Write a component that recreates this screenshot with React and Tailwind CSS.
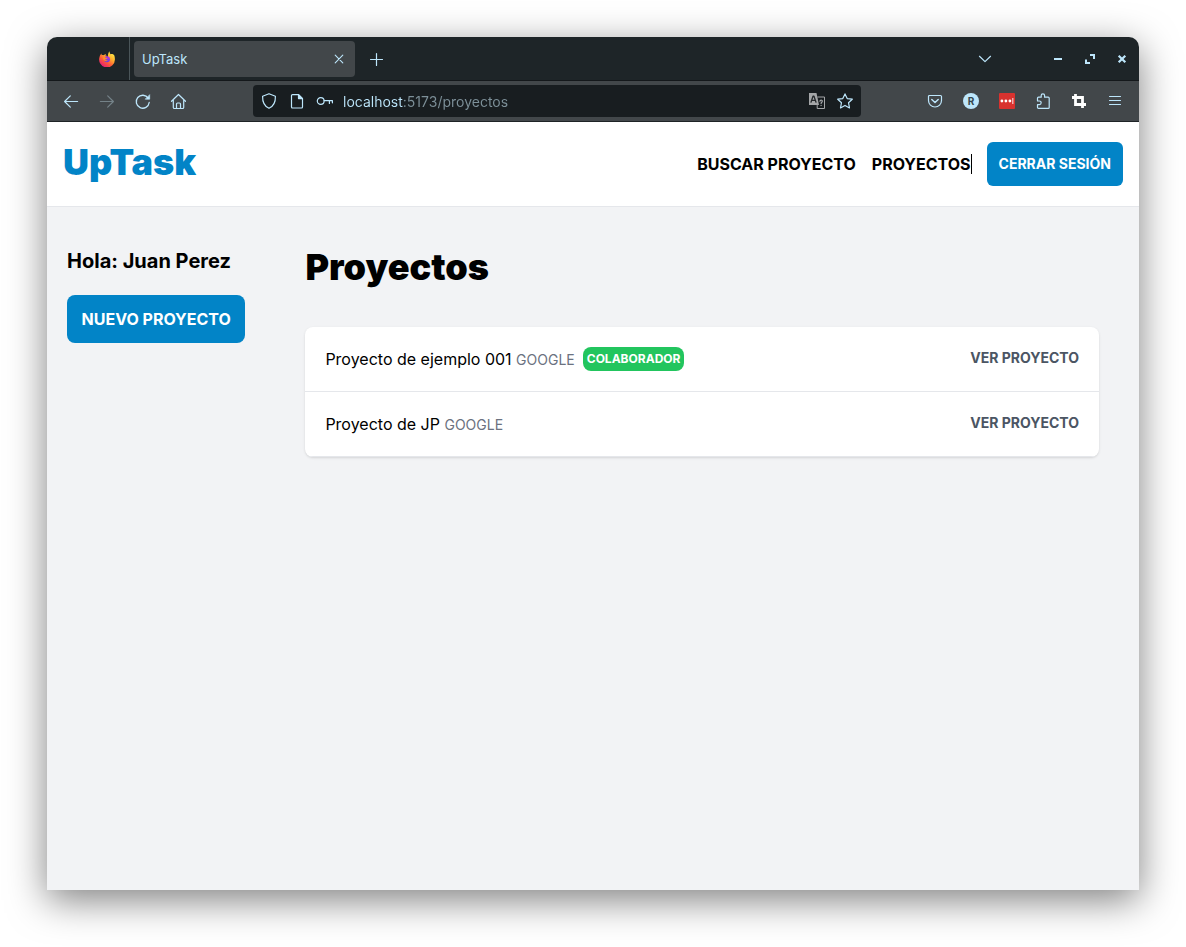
import React from "react";

const projects = [
  { name: "Proyecto de ejemplo 001", client: "Google", collaborator: true },
  { name: "Proyecto de JP", client: "Google", collaborator: false },
];

function Icon({ children }) {
  return (
    <svg
      viewBox="0 0 16 16"
      className="size-4 shrink-0 overflow-visible"
      fill="none"
      stroke="currentColor"
      strokeWidth="1.2"
      strokeLinecap="round"
      strokeLinejoin="round"
      aria-hidden="true"
    >
      {children}
    </svg>
  );
}

function ToolButton({ label, className = "w-9", children }) {
  return (
    <button type="button" aria-label={label} className={`flex h-8 shrink-0 items-center justify-center ${className}`}>
      <Icon>{children}</Icon>
    </button>
  );
}

function FirefoxLogo() {
  return (
    <svg viewBox="0 0 16 16" className="size-4" aria-hidden="true">
      <defs>
        <linearGradient id="fx-body" x1="0.85" y1="0.05" x2="0.2" y2="0.95">
          <stop offset="0" stopColor="#fff14a" />
          <stop offset="0.35" stopColor="#ffb02e" />
          <stop offset="0.65" stopColor="#ff5a36" />
          <stop offset="1" stopColor="#e5187a" />
        </linearGradient>
        <linearGradient id="fx-globe" x1="0.7" y1="0" x2="0.3" y2="1">
          <stop offset="0" stopColor="#b833e1" />
          <stop offset="1" stopColor="#5b3fe0" />
        </linearGradient>
      </defs>
      <path
        d="M10.7.3c-.3 1.300.1 2.200.9 2.900C13.800 2.900 14 3.500 14.700 4.200c-.2-.8-.1-1.200-.3-1.500C15.500 4.500 15.900 6 15.900 8A7.900 7.900 0 1 1 .6 5.800C1 4.500 1.500 3.400 2.500 2.600l.2 1.700c.7-.4 1.500-.4 2.200-.1.600-.8 1.400-1.300 2.300-1.400-.5.5-.8 1-.8 1.600 1 .2 1.700.2 1.700.7-.3.700-1.600.9-1.700 1.600h2C9.300 5 8.500 2.200 10.700.3z"
        fill="url(#fx-body)"
      />
      <circle cx="8" cy="8.300" r="3" fill="url(#fx-globe)" />
      <path d="M3.600 6.400c1-.5 2-.4 2.800.1.800.4 1.600.4 2.200.7-.6.9-1.500 1.200-2.500 1.100.5.900 1.700 1.500 3 .9-1.300 1.900-4.600 1.200-5.500-2.800z" fill="#ff8a2a" />
    </svg>
  );
}

function TitleBar() {
  return (
    <div className="flex h-11 items-stretch border-b border-[#14181b] bg-[#1e2528]">
      <div className="flex w-[83px] shrink-0 items-center justify-end border-r border-[#4a5559] pr-3.5">
        <FirefoxLogo />
      </div>
      <div className="mx-1 mt-1 mb-[3px] flex w-[221px] items-center justify-between rounded bg-[#42474a] pl-2">
        <span className="text-[13px] leading-5">UpTask</span>
        <ToolButton label="Cerrar pestaña" className="w-8">
          <path d="M4.200 4.200l7.600 7.600M11.800 4.200l-7.600 7.600" strokeWidth="1.100" />
        </ToolButton>
      </div>
      <div className="flex flex-1 items-center justify-between pr-px">
        <ToolButton label="Nueva pestaña">
          <path d="M7.500 2.500v12M1.500 8.500h12" strokeWidth="1.200" />
        </ToolButton>
        <div className="flex items-center">
          <ToolButton label="Listar pestañas" className="mr-10 w-8">
            <path d="M1.200 5l5.800 5.600L12.800 5" strokeLinecap="butt" />
          </ToolButton>
          <ToolButton label="Minimizar" className="w-8">
            <path d="M4 8h8" strokeWidth="2" strokeLinecap="butt" />
          </ToolButton>
          <ToolButton label="Maximizar" className="w-8">
            <path d="M8 4h4v4M4 8.500V12h4" strokeWidth="2" strokeLinecap="butt" strokeLinejoin="miter" />
          </ToolButton>
          <ToolButton label="Cerrar ventana" className="w-8">
            <path d="M4.700 4.700l6.600 6.600M11.300 4.700l-6.600 6.600" strokeWidth="2.200" strokeLinecap="butt" />
          </ToolButton>
        </div>
      </div>
    </div>
  );
}

function AddressBar() {
  return (
    <div className="mx-14 flex h-8 flex-1 items-center rounded bg-[#181d20] px-0.5">
      <ToolButton label="Protección antirrastreo" className="w-7">
        <path d="M8 .7l6.400 2.500c.2 5.600-1.400 9.800-6.400 12.100-5-2.300-6.600-6.500-6.400-12.100z" />
      </ToolButton>
      <ToolButton label="Información del sitio" className="w-7">
        <path d="M3.500 1.600h6l4 4v8.400a1 1 0 0 1-1 1h-9a1 1 0 0 1-1-1V2.600a1 1 0 0 1 1-1z" />
        <path d="M9.500 1.600v4h4z" fill="currentColor" />
      </ToolButton>
      <ToolButton label="Contraseñas guardadas" className="w-7">
        <circle cx="3.700" cy="8" r="3.400" />
        <path d="M7.100 7.600h8.300v2.200M12.400 7.600v2.800" />
      </ToolButton>
      <input
        aria-label="Dirección"
        defaultValue="localhost:5173/proyectos"
        className="mx-1 h-6 min-w-0 flex-1 bg-[linear-gradient(90deg,#bde6fb_60px,#7d9099_60px)] bg-clip-text text-sm text-transparent caret-white outline-none"
      />
      <ToolButton label="Traducir página" className="w-7">
        <path d="M0 0h7.500l2.500 12H0z" fill="#a4a6a8" stroke="none" />
        <path d="M2 9.200l2-6h1l2 6M2.800 7.400h3.400" stroke="#25292c" strokeWidth="1.300" />
        <path d="M8.800 4h6.700v11.500H8.200v-3" stroke="#a4a6a8" strokeWidth="1" />
        <path d="M10.900 8.200c.1-1.600 2.500-1.500 2.400 0 0 1-1.200 1-1.200 2.200M12.100 12.300v.1" stroke="#a4a6a8" strokeWidth="1.200" />
      </ToolButton>
      <ToolButton label="Añadir a marcadores" className="w-7">
        <path d="M8 .9l2.200 4.700 5.100.6-3.800 3.500 1 5.200L8 12.400l-4.500 2.500 1-5.200L.7 6.200l5.100-.6z" />
      </ToolButton>
    </div>
  );
}

function Toolbar() {
  return (
    <div className="flex h-[41px] items-center border-b border-[#1e2326] bg-[#42474a] px-1.5">
      <ToolButton label="Atrás">
        <path d="M1.600 8.500h13M7.300 2.800L1.600 8.500l5.700 5.700" />
      </ToolButton>
      <button type="button" aria-label="Adelante" disabled className="flex h-8 w-9 items-center justify-center text-[#748288]">
        <Icon>
          <path d="M1.400 8.500h13M8.700 2.800l5.700 5.700-5.700 5.700" />
        </Icon>
      </button>
      <ToolButton label="Recargar">
        <path d="M13.200 5.200A6.500 6.500 0 1 0 14.200 9.500" strokeWidth="1.300" />
        <path d="M14.700 2v4.200h-4.200z" fill="currentColor" strokeWidth="0.600" />
      </ToolButton>
      <ToolButton label="Inicio">
        <path d="M.5 8.300L7.500 1.500l7 6.800M2.300 7v7.500a1 1 0 0 0 1 1h8.400a1 1 0 0 0 1-1V7M5.500 15.500v-4.500a1 1 0 0 1 1-1h2a1 1 0 0 1 1 1v4.500" />
      </ToolButton>
      <AddressBar />
      <ToolButton label="Guardar en Pocket">
        <path d="M2.500 2.500h11a1 1 0 0 1 1 1v4a6.500 6.500 0 0 1-13 0v-4a1 1 0 0 1 1-1z" />
        <path d="M4.800 6.500L8 9.500l3.200-3" strokeWidth="1.500" />
      </ToolButton>
      <button type="button" className="flex h-8 w-9 items-center justify-center">
        <span className="flex size-4 items-center justify-center rounded-full bg-[#bde6fb] text-[10px] leading-4 font-bold text-[#34464f]">R</span>
      </button>
      <ToolButton label="Gestor de contraseñas">
        <rect width="16" height="16" rx="1" fill="#d8322f" stroke="none" />
        <g fill="#fff" stroke="none">
          <circle cx="2.900" cy="8" r="1.400" />
          <circle cx="6.900" cy="8" r="1.400" />
          <circle cx="10.900" cy="8" r="1.400" />
          <rect x="13.400" y="5" width="0.900" height="6" />
        </g>
      </ToolButton>
      <ToolButton label="Extensiones">
        <path d="M2.500 5.200a1 1 0 0 1 1-1h2.700V2.500a1.700 1.700 0 0 1 3.400 0v1.700h3.600a1 1 0 0 1 1 1v9.200a1 1 0 0 1-1 1H3.500a1 1 0 0 1-1-1v-2.700h1.800a1.700 1.700 0 0 0 0-3.700H2.500z" />
      </ToolButton>
      <ToolButton label="Captura">
        <path d="M4.500 1v10.500H15M1 4.500h10.500V15" stroke="#fff" strokeWidth="2.800" strokeLinecap="butt" strokeLinejoin="miter" />
      </ToolButton>
      <ToolButton label="Menú">
        <path d="M2.500 3.500h11M2.500 7.500h11M2.500 11.500h11" />
      </ToolButton>
    </div>
  );
}

function Header() {
  return (
    <header className="flex justify-between border-b border-[#e5e7eb] bg-white px-4 py-5">
      <h2 className="text-4xl font-black text-[#0284c7]">UpTask</h2>
      <nav className="flex items-center gap-4">
        <button type="button" className="font-bold uppercase">Buscar proyecto</button>
        <a href="/proyectos" className="relative font-bold uppercase">
          Proyectos
          <span className="absolute top-1/2 -right-px h-5 w-px -translate-y-1/2 bg-black" />
        </a>
        <button type="button" className="rounded-md bg-[#0284c7] p-3 text-sm font-bold text-white uppercase">
          Cerrar sesión
        </button>
      </nav>
    </header>
  );
}

function ProjectRow({ name, client, collaborator }) {
  return (
    <li className="flex justify-between border-b border-[#e5e7eb] p-5">
      <div className="flex items-center gap-2">
        <p>
          {name} <span className="text-sm text-[#6b7280] uppercase">{client}</span>
        </p>
        {collaborator && (
          <p className="rounded-lg bg-[#22c55e] p-1 text-xs font-bold text-white uppercase">Colaborador</p>
        )}
      </div>
      <a href="/proyectos" className="text-sm leading-[22px] font-bold text-[#4b5563] uppercase">Ver proyecto</a>
    </li>
  );
}

export default function App() {
  return (
    <div className="flex min-h-screen flex-col bg-white px-[47px] pt-[37px] pb-[57px] font-[Inter,sans-serif] text-black">
      <div className="flex flex-1 flex-col overflow-hidden rounded-t-[10px] bg-[#f2f3f5] shadow-[0_10px_38px_rgba(0,0,0,0.5)]">
        <div className="text-[#bde6fb]">
          <TitleBar />
          <Toolbar />
        </div>
        <Header />
        <div className="grid flex-1 grid-cols-[1fr_4fr]">
          <aside className="px-5 py-10">
            <p className="text-xl font-bold">Hola: Juan Perez</p>
            <a href="/proyectos/crear-proyecto" className="mt-5 block rounded-lg bg-[#0284c7] p-3 text-center font-bold text-white uppercase">
              Nuevo proyecto
            </a>
          </aside>
          <main className="p-10">
            <h1 className="text-4xl font-black">Proyectos</h1>
            <ul className="mt-10 overflow-hidden rounded-lg bg-white shadow">
              {projects.map((project) => (
                <ProjectRow key={project.name} {...project} />
              ))}
            </ul>
          </main>
        </div>
      </div>
    </div>
  );
}
